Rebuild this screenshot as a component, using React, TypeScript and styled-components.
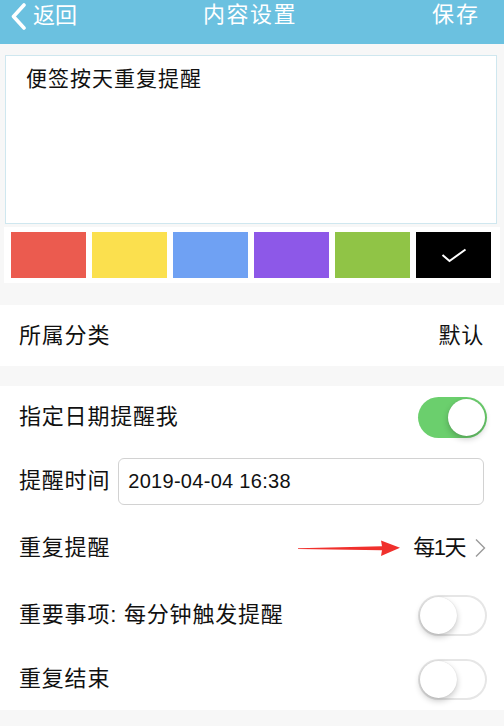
import React from "react";
import styled, { createGlobalStyle } from "styled-components";

const GlobalStyle = createGlobalStyle`
  html, body { margin: 0; padding: 0; background: #f7f7f7; }
  body { font-family: "Liberation Sans", "Noto Sans CJK SC", sans-serif; color: #111; }
  * { box-sizing: border-box; }
`;

const Page = styled.div`
  width: 504px;
  height: 726px;
  background: #f7f7f7;
  display: flex;
  flex-direction: column;
  overflow: hidden;
`;

const Header = styled.header`
  height: 44px;
  background: #6bc1e0;
  display: flex;
  align-items: flex-start;
  justify-content: space-between;
  padding: 0 24px 0 10px;
  color: #fff;
  font-size: 22px;
  line-height: 30px;
`;

const Back = styled.div`
  display: flex;
  align-items: center;
  gap: 5px;
  width: 110px;
`;

const Title = styled.div`
  flex: 1;
  text-align: center;
  letter-spacing: 1.5px;
  padding-left: 10px;
`;

const Save = styled.div`
  width: 110px;
  text-align: right;
  letter-spacing: 2px;
`;

const NoteBox = styled.div`
  margin: 11px 7px 0 5px;
  height: 169px;
  background: #fff;
  border: 1px solid #cfe7ef;
  padding: 11px 20px;
  font-size: 21px;
  line-height: 24px;
  letter-spacing: 1px;
  color: #111;
`;

const ColorPanel = styled.div`
  margin: 3px 4px 0 4px;
  background: #fff;
  padding: 5px 9px 5px 7px;
  display: grid;
  grid-template-columns: repeat(6, 1fr);
  gap: 6.6px;
`;

const Swatch = styled.div<{ $c: string }>`
  height: 46px;
  background: ${(p) => p.$c};
  display: flex;
  align-items: center;
  justify-content: center;
`;

const Section = styled.div<{ $mt: number }>`
  margin-top: ${(p) => p.$mt}px;
  background: #fff;
  display: flex;
  flex-direction: column;
`;

const Row = styled.div<{ $h: number }>`
  height: ${(p) => p.$h}px;
  display: flex;
  align-items: center;
  justify-content: space-between;
  padding: 0 17px 0 19px;
  font-size: 22px;
  line-height: 26px;
  color: #111;
`;

const Label = styled.span`
  letter-spacing: 0.8px;
  white-space: nowrap;
`;

const Value = styled.span<{ $ls?: number }>`
  letter-spacing: ${(p) => (p.$ls ?? 0.8)}px;
  margin-right: 3px;
`;

const TimeInput = styled.div`
  flex: 1;
  margin-left: 8px;
  margin-right: 3px;
  height: 47px;
  border: 1px solid #d2d2d2;
  border-radius: 6px;
  display: flex;
  align-items: center;
  padding-left: 9px;
  font-size: 20px;
  letter-spacing: 0.3px;
  color: #111;
`;

const RightGroup = styled.div`
  display: flex;
  align-items: center;
`;

const Toggle = styled.div<{ $on: boolean }>`
  position: relative;
  width: 69px;
  height: 41px;
  border-radius: 21px;
  background: ${(p) => (p.$on ? "#6bcf6d" : "#fff")};
  box-shadow: ${(p) => (p.$on ? "none" : "inset 0 0 0 2px #e6e6e6")};
`;

const Knob = styled.div<{ $on: boolean }>`
  position: absolute;
  top: 2px;
  left: ${(p) => (p.$on ? "30px" : "2px")};
  width: 37px;
  height: 37px;
  border-radius: 50%;
  background: #fff;
  box-shadow: 0 3px 6px rgba(0, 0, 0, 0.22), 0 0 1px rgba(0, 0, 0, 0.15);
`;

const Switch = ({ on }: { on: boolean }) => (
  <Toggle $on={on}>
    <Knob $on={on} />
  </Toggle>
);

const colors = ["#eb5b4f", "#fbe04e", "#6fa1f3", "#8d58e8", "#90c446", "#000000"];

export default function App() {
  return (
    <>
      <GlobalStyle />
      <Page>
        <Header>
          <Back>
            <svg width="18" height="28" viewBox="0 0 18 28" style={{ marginTop: 3 }}>
              <path d="M14 2 L3.5 13.5 L14 25" fill="none" stroke="#fff" strokeWidth="3.6" strokeLinecap="round" strokeLinejoin="round" />
            </svg>
            <span>返回</span>
          </Back>
          <Title>内容设置</Title>
          <Save>保存</Save>
        </Header>

        <NoteBox>便签按天重复提醒</NoteBox>

        <ColorPanel>
          {colors.map((c, i) => (
            <Swatch key={c} $c={c}>
              {i === colors.length - 1 && (
                <svg width="26" height="16" viewBox="0 0 26 16">
                  <path d="M1.5 8 L8.5 14 L24.5 2.5" fill="none" stroke="#fff" strokeWidth="2" />
                </svg>
              )}
            </Swatch>
          ))}
        </ColorPanel>

        <Section $mt={22}>
          <Row $h={61}>
            <Label>所属分类</Label>
            <Value>默认</Value>
          </Row>
        </Section>

        <Section $mt={20}>
          <Row $h={62}>
            <Label>指定日期提醒我</Label>
            <Switch on />
          </Row>
          <Row $h={66}>
            <Label>提醒时间</Label>
            <TimeInput>2019-04-04 16:38</TimeInput>
          </Row>
          <Row $h={68}>
            <Label>重复提醒</Label>
            <RightGroup>
              <svg width="106" height="24" viewBox="0 0 106 24" style={{ marginRight: 11 }}>
                <polygon points="2,12.3 86,10.2 85,4.5 104,11.8 85,20 86,14.2 2,12.9" fill="#f0302c" />
              </svg>
              <Value $ls={-1.5}>每1天</Value>
              <svg width="14" height="20" viewBox="0 0 14 20" style={{ marginLeft: 5 }}>
                <path d="M3 1.5 L11.5 10 L3 18.5" fill="none" stroke="#9a9a9a" strokeWidth="1.4" />
              </svg>
            </RightGroup>
          </Row>
          <Row $h={66}>
            <Label>重要事项: 每分钟触发提醒</Label>
            <Switch on={false} />
          </Row>
          <Row $h={62}>
            <Label>重复结束</Label>
            <Switch on={false} />
          </Row>
        </Section>
      </Page>
    </>
  );
}
